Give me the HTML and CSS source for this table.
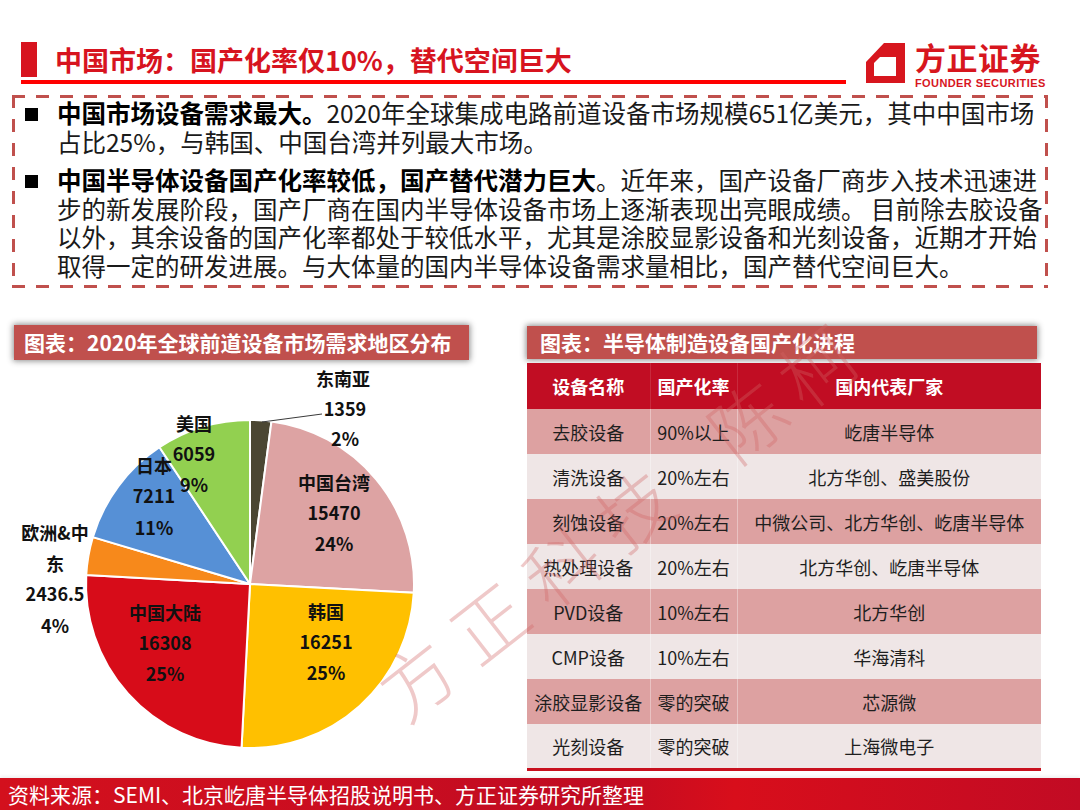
FILE: index.html
```html
<!DOCTYPE html>
<html lang="zh-CN">
<head>
<meta charset="utf-8">
<title>中国市场：国产化率仅10%，替代空间巨大</title>
<link rel="stylesheet" href="styles.css">
</head>
<body>
<div class="page">
  <header class="header">
    <div class="title-col">
      <div class="title-row">
        <div class="title-bar"></div>
        <h1 class="title-text">中国市场：国产化率仅10%，替代空间巨大</h1>
      </div>
      <div class="title-line"></div>
    </div>
    <div class="logo">
      <svg class="logo-icon" width="50" height="50" viewBox="0 0 50 50">
        <polygon points="26,7 47,7 47,47 8,47 8,26" fill="#d7161e"/>
        <polygon points="22,21 38,21 38,40 16,40 16,27" fill="#fff"/>
      </svg>
      <div class="logo-text">
        <div class="logo-cn">方正证券</div>
        <div class="logo-en">FOUNDER SECURITIES</div>
      </div>
    </div>
  </header>

  <section class="notes">
    <div class="item">
      <span class="sq"></span>
      <p class="para"><span class="ln"><b>中国市场设备需求最大。</b>2020年全球集成电路前道设备市场规模651亿美元，其中中国市场</span><span class="ln">占比25%，与韩国、中国台湾并列最大市场。</span></p>
    </div>
    <div class="item item2">
      <span class="sq"></span>
      <p class="para"><span class="ln"><b>中国半导体设备国产化率较低，国产替代潜力巨大</b>。近年来，国产设备厂商步入技术迅速进</span><span class="ln">步的新发展阶段，国产厂商在国内半导体设备市场上逐渐表现出亮眼成绩。 目前除去胶设备</span><span class="ln">以外，其余设备的国产化率都处于较低水平，尤其是涂胶显影设备和光刻设备，近期才开始</span><span class="ln">取得一定的研发进展。与大体量的国内半导体设备需求量相比，国产替代空间巨大。</span></p>
    </div>
  </section>

  <main class="charts">
    <div class="left-panel">
      <div class="caption cap-left">图表：2020年全球前道设备市场需求地区分布</div>
      <svg class="pie" width="520" height="413" viewBox="0 0 520 413">
        <g stroke="#fff" stroke-width="2" stroke-linejoin="round">
          <path d="M250,219 L250,55 A164,164 0 0 1 271.47,56.41 Z" fill="#4b4632"/>
          <path d="M250,219 L271.47,56.41 A164,164 0 0 1 413.76,227.81 Z" fill="#dda3a3"/>
          <path d="M250,219 L413.76,227.81 A164,164 0 0 1 241.53,382.78 Z" fill="#ffc000"/>
          <path d="M250,219 L241.53,382.78 A164,164 0 0 1 86.25,209.99 Z" fill="#d70c19"/>
          <path d="M250,219 L86.25,209.99 A164,164 0 0 1 92.85,172.09 Z" fill="#f7891b"/>
          <path d="M250,219 L92.85,172.09 A164,164 0 0 1 159.48,82.24 Z" fill="#5690d6"/>
          <path d="M250,219 L159.48,82.24 A164,164 0 0 1 250,55 Z" fill="#92d050"/>
        </g>
        <polyline points="262,57 322,49" fill="none" stroke="#3a3a3a" stroke-width="1"/>
        <g class="lbl">
          <text x="343" y="13">东南亚</text>
          <text x="345" y="43">1359</text>
          <text x="345" y="73">2%</text>
          <text x="334" y="117">中国台湾</text>
          <text x="334" y="147">15470</text>
          <text x="334" y="178">24%</text>
          <text x="326" y="246">韩国</text>
          <text x="326" y="276">16251</text>
          <text x="326" y="307">25%</text>
          <text x="165" y="247">中国大陆</text>
          <text x="165" y="277">16308</text>
          <text x="165" y="308">25%</text>
          <text x="55" y="167">欧洲&amp;中</text>
          <text x="55" y="198">东</text>
          <text x="55" y="228">2436.5</text>
          <text x="55" y="260">4%</text>
          <text x="154" y="100">日本</text>
          <text x="154" y="130">7211</text>
          <text x="154" y="162">11%</text>
          <text x="194" y="58">美国</text>
          <text x="194" y="88">6059</text>
          <text x="194" y="119">9%</text>
        </g>
      </svg>
    </div>
    <div class="right-panel">
      <div class="caption cap-right">图表：半导体制造设备国产化进程</div>
      <table class="tbl">
        <colgroup><col class="c1"><col class="c2"><col class="c3"></colgroup>
        <thead>
          <tr><th>设备名称</th><th>国产化率</th><th>国内代表厂家</th></tr>
        </thead>
        <tbody>
          <tr><td>去胶设备</td><td>90%以上</td><td>屹唐半导体</td></tr>
          <tr><td>清洗设备</td><td>20%左右</td><td>北方华创、盛美股份</td></tr>
          <tr><td>刻蚀设备</td><td>20%左右</td><td>中微公司、北方华创、屹唐半导体</td></tr>
          <tr><td>热处理设备</td><td>20%左右</td><td>北方华创、屹唐半导体</td></tr>
          <tr><td>PVD设备</td><td>10%左右</td><td>北方华创</td></tr>
          <tr><td>CMP设备</td><td>10%左右</td><td>华海清科</td></tr>
          <tr><td>涂胶显影设备</td><td>零的突破</td><td>芯源微</td></tr>
          <tr><td>光刻设备</td><td>零的突破</td><td>上海微电子</td></tr>
        </tbody>
      </table>
    </div>
  </main>

  <footer class="footer">资料来源：SEMI、北京屹唐半导体招股说明书、方正证券研究所整理</footer>

  <div class="watermark"><span>方</span><span>正</span><span>科</span><span>技</span><span class="gap">陈</span><span class="gap2">柯</span></div>
</div>
</body>
</html>
```

FILE: styles.css
```css
* { box-sizing: border-box; }
html, body { margin: 0; padding: 0; background: #fff; }
body {
  font-family: "Noto Sans CJK SC", "Noto Sans", sans-serif;
  color: #1a1a1a;
}
.page {
  position: relative;
  width: 1080px;
  height: 810px;
  overflow: hidden;
  display: flex;
  flex-direction: column;
}

/* header */
.header {
  height: 95px;
  padding: 42px 0 0 21px;
  display: flex;
  align-items: flex-start;
  flex: none;
}
.title-col { width: 825px; }
.title-row { display: flex; align-items: center; height: 35px; }
.title-bar { width: 16px; height: 35px; background: #d7141f; flex: none; }
.title-text {
  margin: 0 0 0 18px;
  font-size: 27px;
  font-weight: bold;
  color: #d7141f;
  line-height: 35px;
  white-space: nowrap;
}
.title-line { height: 4px; background: #ff0000; margin-top: 3px; }
.logo { display: flex; margin-left: 12px; margin-top: -6px; }
.logo-icon { flex: none; }
.logo-text { margin-left: 7px; margin-top: 6px; color: #d7161e; }
.logo-cn {
  font-size: 31px;
  font-weight: bold;
  line-height: 30px;
  letter-spacing: 0.5px;
  white-space: nowrap;
}
.logo-en {
  font-family: "Liberation Sans", Arial, sans-serif;
  font-size: 11px;
  font-weight: bold;
  letter-spacing: 0.4px;
  line-height: 12px;
  margin-top: 5px;
  white-space: nowrap;
}

/* notes box */
.notes {
  margin: 0 32px 0 12px;
  height: 193px;
  padding: 4px 10px 0 13px;
  background:
    repeating-linear-gradient(90deg, #c0504d 0 13px, transparent 13px 24px) top left / 100% 3px no-repeat,
    repeating-linear-gradient(90deg, #c0504d 0 13px, transparent 13px 24px) bottom left / 100% 3px no-repeat,
    repeating-linear-gradient(180deg, #c0504d 0 13px, transparent 13px 24px) top left / 3px 100% no-repeat,
    repeating-linear-gradient(180deg, #c0504d 0 13px, transparent 13px 24px) top right / 3px 100% no-repeat;
  flex: none;
}
.item { display: flex; align-items: flex-start; }
.item2 { margin-top: 10px; }
.sq {
  width: 13px;
  height: 13px;
  background: #000;
  flex: none;
  margin: 9px 19px 0 0;
}
.para {
  margin: 0;
  font-size: 24.5px;
  line-height: 28.5px;
  color: #1a1a1a;
}
.para b { font-weight: bold; color: #000; display: inline-block; }
.ln { display: block; white-space: nowrap; height: 28.5px; }

/* charts */
.charts {
  display: flex;
  margin-top: 37px;
  flex: none;
}
.left-panel { width: 520px; flex: none; }
.caption {
  background: #c0504d;
  color: #fff;
  font-weight: bold;
  font-size: 21px;
  white-space: nowrap;
  box-shadow: 0 0 6px 1px rgba(0, 0, 0, 0.45);
}
.cap-left {
  margin-left: 14px;
  width: 455px;
  height: 35px;
  line-height: 35px;
  padding-left: 10px;
}
.pie { display: block; margin-top: 5px; }
.lbl text {
  font-family: "Noto Sans CJK SC", "Noto Sans", sans-serif;
  font-size: 18px;
  font-weight: bold;
  fill: #111;
  text-anchor: middle;
  dominant-baseline: central;
}

.right-panel { margin-left: 7px; width: 514px; flex: none; }
.cap-right {
  margin-top: 1px;
  width: 510px;
  height: 33px;
  line-height: 33px;
  padding-left: 13px;
}
.tbl {
  margin-top: 4px;
  width: 514px;
  border-collapse: collapse;
  table-layout: fixed;
  font-size: 18px;
  border-bottom: 3px solid #c8101e;
}
.c1 { width: 123px; }
.c2 { width: 87px; }
.c3 { width: 304px; }
.tbl th {
  height: 46px;
  background: #c10d23;
  color: #fff;
  font-weight: bold;
  text-align: center;
  padding: 0;
  border-right: 1px solid rgba(255, 255, 255, 0.12);
}
.tbl td {
  height: 45px;
  text-align: center;
  padding: 0;
  color: #1e1e1e;
  white-space: nowrap;
  border-right: 1px solid rgba(255, 255, 255, 0.35);
}
.tbl tbody tr:nth-child(odd) td { background: #dda1a1; }
.tbl tbody tr:nth-child(even) td { background: #efe6e6; }
.tbl th:last-child, .tbl td:last-child { border-right: none; }

/* footer */
.footer {
  margin-top: auto;
  height: 32px;
  line-height: 32px;
  padding-left: 8px;
  color: #fff;
  font-size: 21px;
  white-space: nowrap;
  background: linear-gradient(90deg, #d3101d 0%, #c90d20 35%, #c00b22 55%, #d80e1b 68%, #c20b24 100%);
  flex: none;
  box-shadow: 0 -2px 3px rgba(0, 0, 0, 0.06);
}

/* watermark overlay */
.watermark {
  position: absolute;
  left: 378px;
  top: 640px;
  height: 74px;
  font-size: 74px;
  line-height: 74px;
  font-weight: 300;
  color: rgba(210, 100, 100, 0.35);
  white-space: nowrap;
  transform-origin: 37px 37px;
  transform: rotate(-38deg);
  pointer-events: none;
}
.watermark span { margin-right: 18px; }
.watermark .gap { margin-left: 52px; margin-right: 14px; }
```
